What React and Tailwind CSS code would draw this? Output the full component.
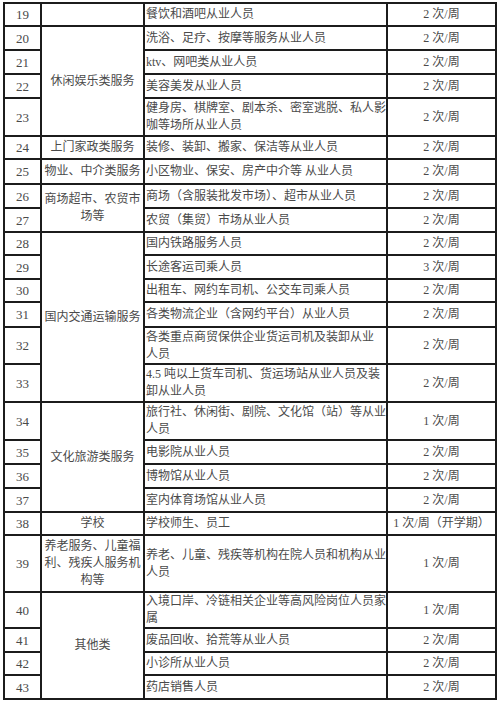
import React from 'react';

const rows = [
  { n: 19, h: 23, cat: '', span: 1, text: ['餐饮和酒吧从业人员'], f: '2 次/周' },
  { n: 20, h: 24, cat: ['休闲娱乐类服务'], span: 4, text: ['洗浴、足疗、按摩等服务从业人员'], f: '2 次/周' },
  { n: 21, h: 24, text: ['ktv、网吧类从业人员'], f: '2 次/周' },
  { n: 22, h: 24, text: ['美容美发从业人员'], f: '2 次/周' },
  { n: 23, h: 38, text: ['健身房、棋牌室、剧本杀、密室逃脱、私人影', '咖等场所从业人员'], f: '2 次/周' },
  { n: 24, h: 23, cat: ['上门家政类服务'], span: 1, text: ['装修、装卸、搬家、保洁等从业人员'], f: '2 次/周' },
  { n: 25, h: 25, cat: ['物业、中介类服务'], span: 1, text: ['小区物业、保安、房产中介等 从业人员'], f: '2 次/周' },
  { n: 26, h: 24, cat: ['商场超市、农贸市', '场等'], span: 2, text: ['商场（含服装批发市场）、超市从业人员'], f: '2 次/周' },
  { n: 27, h: 24, text: ['农贸（集贸）市场从业人员'], f: '2 次/周' },
  { n: 28, h: 23, cat: ['国内交通运输服务'], span: 6, text: ['国内铁路服务人员'], f: '2 次/周' },
  { n: 29, h: 24, text: ['长途客运司乘人员'], f: '3 次/周' },
  { n: 30, h: 23, text: ['出租车、网约车司机、公交车司乘人员'], f: '2 次/周' },
  { n: 31, h: 25, text: ['各类物流企业（含网约平台）从业人员'], f: '2 次/周' },
  { n: 32, h: 37, text: ['各类重点商贸保供企业货运司机及装卸从业', '人员'], f: '2 次/周' },
  { n: 33, h: 38, text: ['4.5 吨以上货车司机、货运场站从业人员及装', '卸从业人员'], f: '2 次/周' },
  { n: 34, h: 38, cat: ['文化旅游类服务'], span: 4, text: ['旅行社、休闲街、剧院、文化馆（站）等从业', '人员'], f: '1 次/周' },
  { n: 35, h: 24, text: ['电影院从业人员'], f: '2 次/周' },
  { n: 36, h: 24, text: ['博物馆从业人员'], f: '2 次/周' },
  { n: 37, h: 24, text: ['室内体育场馆从业人员'], f: '2 次/周' },
  { n: 38, h: 23, cat: ['学校'], span: 1, text: ['学校师生、员工'], f: '1 次/周（开学期）' },
  { n: 39, h: 57, cat: ['养老服务、儿童福', '利、残疾人服务机', '构等'], span: 1, text: ['养老、儿童、残疾等机构在院人员和机构从业', '人员'], f: '1 次/周' },
  { n: 40, h: 36, cat: ['其他类'], span: 4, text: ['入境口岸、冷链相关企业等高风险岗位人员家', '属'], f: '1 次/周' },
  { n: 41, h: 24, text: ['废品回收、拾荒等从业人员'], f: '2 次/周' },
  { n: 42, h: 23, text: ['小诊所从业人员'], f: '2 次/周' },
  { n: 43, h: 24, text: ['药店销售人员'], f: '2 次/周' },
];

// multi-line cells keep the original line breaks
const Lines = ({ lines }) =>
  lines.map((l, i) => (
    <React.Fragment key={i}>
      {i > 0 && <br />}
      {l}
    </React.Fragment>
  ));

const cell = 'border-2 border-[#1c1c1c] p-0 align-middle';

export default function App() {
  return (
    <div
      className="w-[500px] h-[707px] bg-white pt-[2px] pl-[3px] text-[#4a4a4a] text-[12px] leading-[17px]"
      style={{ fontFamily: '"Liberation Serif", "Noto Sans CJK SC", serif' }}
    >
      <table className="border-collapse table-fixed w-[492px]">
        <colgroup>
          <col className="w-[37px]" />
          <col className="w-[103px]" />
          <col className="w-[243px]" />
          <col className="w-[109px]" />
        </colgroup>
        <tbody>
          {rows.map((r) => (
            <tr key={r.n} style={{ height: r.h }}>
              <td className={`${cell} text-center text-[13px]`}>{r.n}</td>
              {r.cat !== undefined && (
                <td rowSpan={r.span} className={`${cell} text-center`}>
                  {r.cat && <Lines lines={r.cat} />}
                </td>
              )}
              <td className={`${cell} pl-[1px] whitespace-nowrap`}>
                <Lines lines={r.text} />
              </td>
              <td className={`${cell} text-center`}>{r.f}</td>
            </tr>
          ))}
        </tbody>
      </table>
    </div>
  );
}
